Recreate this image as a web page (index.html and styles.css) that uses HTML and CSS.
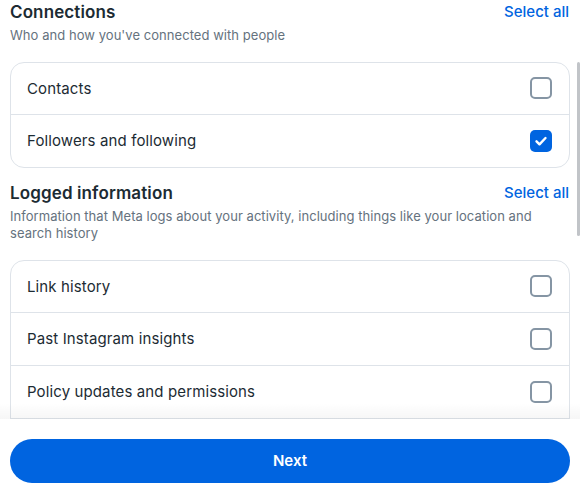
FILE: index.html
```html
<!DOCTYPE html>
<html>
<head>
<meta charset="utf-8">
<link rel="stylesheet" href="styles.css">
</head>
<body>
<div class="page">
  <div class="scroll">
    <section class="section">
      <div class="section-head">
        <h2>Connections</h2>
        <span class="select-all">Select all</span>
      </div>
      <p class="desc">Who and how you've connected with people</p>
      <div class="card">
        <div class="row"><span>Contacts</span><span class="box"></span></div>
        <div class="row"><span>Followers and following</span><span class="box checked"><svg viewBox="0 0 22 22" width="22" height="22"><path d="M6.5 11.3l3 3 6-6.3" fill="none" stroke="#fff" stroke-width="2.4" stroke-linecap="round" stroke-linejoin="round"/></svg></span></div>
      </div>
    </section>
    <section class="section second">
      <div class="section-head">
        <h2>Logged information</h2>
        <span class="select-all">Select all</span>
      </div>
      <p class="desc">Information that Meta logs about your activity, including things like your location and search history</p>
      <div class="card">
        <div class="row"><span>Link history</span><span class="box"></span></div>
        <div class="row"><span>Past Instagram insights</span><span class="box"></span></div>
        <div class="row"><span>Policy updates and permissions</span><span class="box"></span></div>
        <div class="row stub"></div>
      </div>
    </section>
    <div class="fade"></div>
    <div class="thumb"></div>
  </div>
  <div class="footer">
    <button class="next">Next</button>
  </div>
</div>
</body>
</html>
```

FILE: styles.css
```css
* { box-sizing: border-box; }
html, body { margin: 0; padding: 0; background: #fff; }
body {
  font-family: Inter, "Noto Sans", sans-serif;
  color: #1c2b33;
  width: 580px;
  height: 491px;
  overflow: hidden;
}
.page { display: flex; flex-direction: column; height: 491px; }
.scroll {
  position: relative;
  height: 419px;
  overflow: hidden;
  padding: 1px 10px 0 10px;
  flex: none;
}
.section-head {
  display: flex;
  justify-content: space-between;
  align-items: center;
}
h2 {
  margin: 0;
  font-size: 17px;
  line-height: 22px;
  font-weight: 600;
  letter-spacing: 0.12px;
}
.select-all {
  font-size: 15px;
  line-height: 22px;
  font-weight: 500;
  color: #0064e0;
  margin-right: 1px;
}
.desc {
  margin: 4px 0 0 0;
  font-size: 13px;
  line-height: 17px;
  color: #65727e;
  padding-right: 20px;
  letter-spacing: 0.05px;
}
.card {
  margin-top: 18px;
  border: 1px solid #dee3e9;
  border-radius: 14px;
}
.row {
  height: 52px;
  display: flex;
  align-items: center;
  justify-content: space-between;
  padding: 0 17px 1px 16px;
  font-size: 15px;
  letter-spacing: 0.12px;
  border-top: 1px solid #dee3e9;
}
.row:first-child { border-top: none; height: 51px; }
.card .row + .row { height: 53px; }
.box {
  width: 22px;
  height: 22px;
  border: 2px solid #8595a4;
  border-radius: 5px;
  display: block;
}
.box.checked {
  border: none;
  background: #0064e0;
}
.box svg { display: block; }
.second { margin-top: 14px; }
.fade {
  position: absolute;
  left: 0; right: 0; bottom: 0;
  height: 16px;
  background: linear-gradient(to bottom, rgba(0,0,0,0), rgba(0,0,0,0.035));
  pointer-events: none;
}
.thumb {
  position: absolute;
  right: 0;
  top: 62px;
  width: 3px;
  height: 174px;
  background: #c1c4c8;
  border-radius: 2px;
}
.footer { padding: 20px 10px 0 10px; }
.next {
  display: block;
  width: 100%;
  height: 44px;
  border: none;
  border-radius: 22px;
  background: #0064e0;
  color: #fff;
  font-family: Inter, "Noto Sans", sans-serif;
  font-size: 15px;
  font-weight: 600;
  padding: 0 0 2px 0;
}
```
